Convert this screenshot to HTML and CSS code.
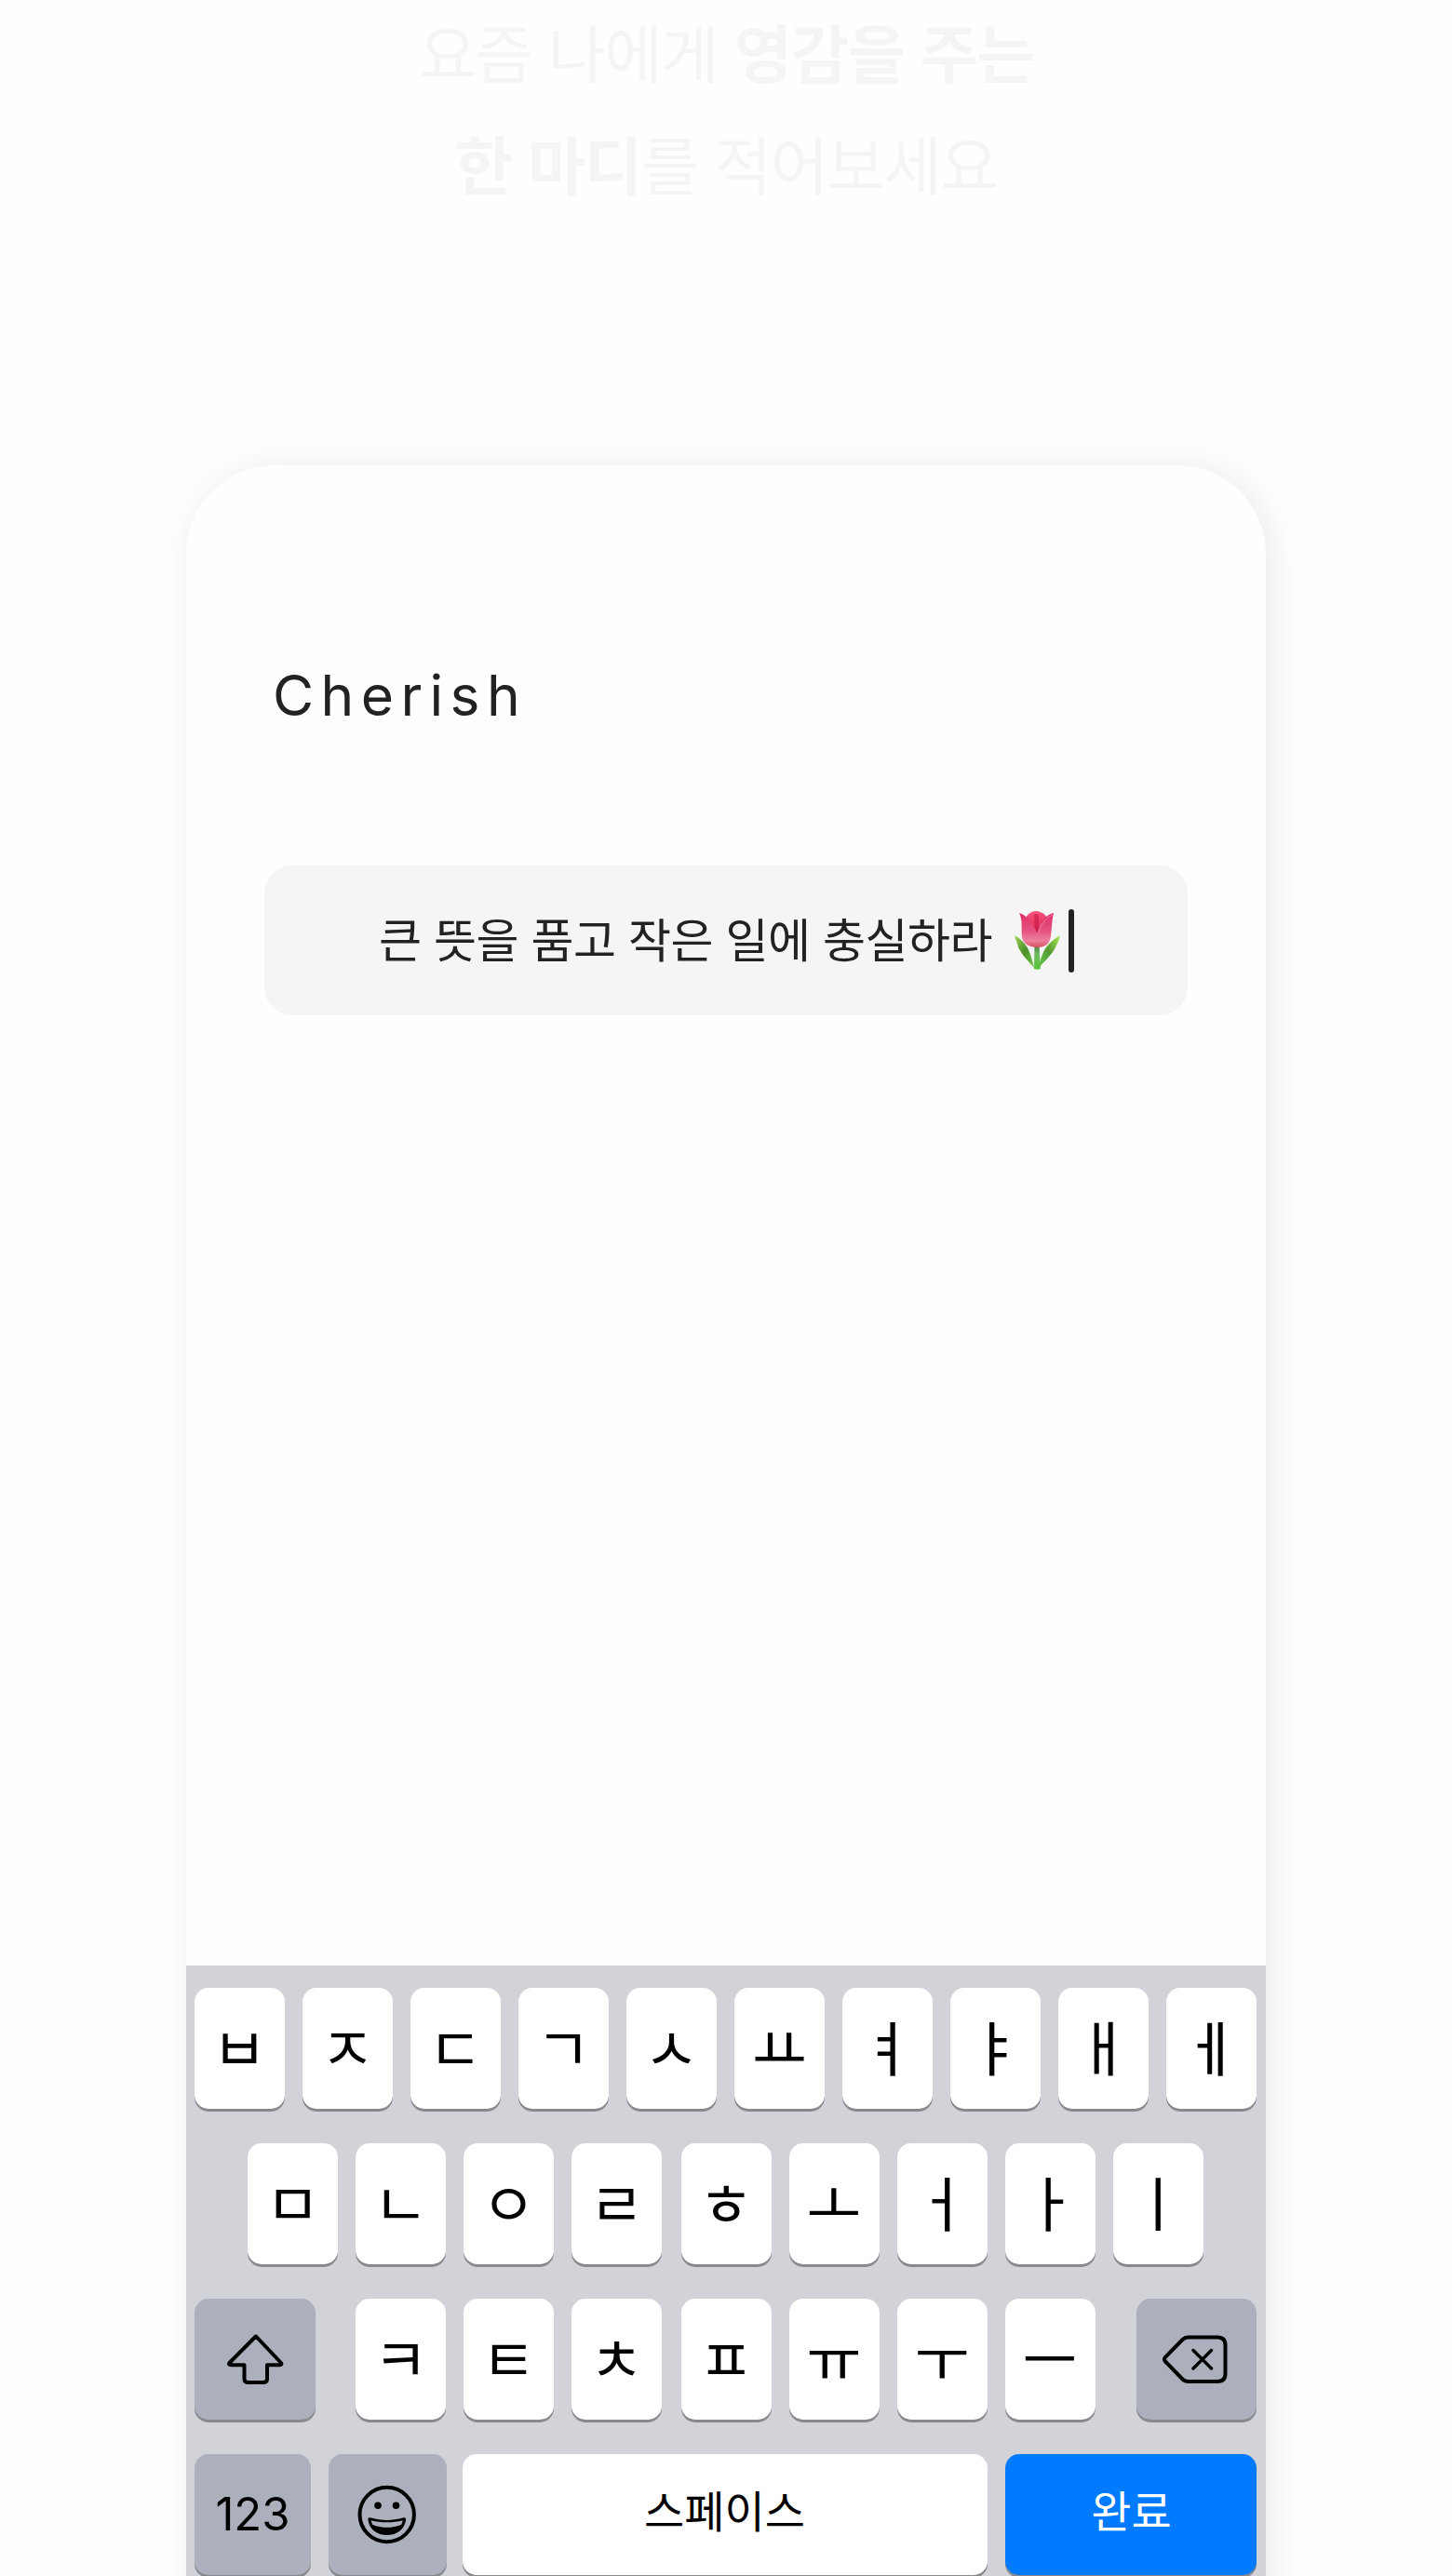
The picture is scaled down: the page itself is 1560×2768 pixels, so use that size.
FILE: index.html
```html
<!DOCTYPE html>
<html lang="ko">
<head>
<meta charset="utf-8">
<title>Cherish</title>
<link rel="stylesheet" href="styles.css">
</head>
<body>
<main class="page">
  <h1 class="headline">요즘 나에게 <b>영감을 주는</b><br><b>한 마디</b>를 적어보세요</h1>
  <section class="phone">
    <div class="content">
      <h2 class="brand">Cherish</h2>
      <div class="field">
        <span class="quote">큰 뜻을 품고 작은 일에 충실하라</span>
        <svg class="tulip" viewBox="0 0 49 63" width="49" height="63" aria-hidden="true">
          <defs>
            <linearGradient id="petal" x1="0" y1="0" x2="0" y2="1">
              <stop offset="0" stop-color="#e02f66"/><stop offset=".5" stop-color="#e4507f"/><stop offset=".8" stop-color="#ee7f9f"/><stop offset="1" stop-color="#d9505f"/>
            </linearGradient>
            <linearGradient id="inner" x1="0" y1="0" x2="0" y2="1">
              <stop offset="0" stop-color="#f9557f"/><stop offset="1" stop-color="#cf1746"/>
            </linearGradient>
            <linearGradient id="leaf" x1="0" y1="0" x2="1" y2="1">
              <stop offset="0" stop-color="#a4d657"/><stop offset=".5" stop-color="#4b8f2c"/><stop offset="1" stop-color="#72cc4a"/>
            </linearGradient>
            <linearGradient id="leafRight" x1="1" y1="0" x2="0" y2="1">
              <stop offset="0" stop-color="#b2ec55"/><stop offset=".5" stop-color="#569a35"/><stop offset="1" stop-color="#66c846"/>
            </linearGradient>
            <linearGradient id="stem" x1="0" y1="0" x2="0" y2="1">
              <stop offset="0" stop-color="#4e7a3a"/><stop offset=".35" stop-color="#6fbb63"/><stop offset="1" stop-color="#58c535"/>
            </linearGradient>
          </defs>
          <path fill="url(#leaf)" d="M0 26c7 4 13 10 16 18 2 6 4 11 5 17-6-7-13-14-17-22C3 34 1 31 0 26z"/>
          <path fill="url(#leafRight)" d="M49 26c-7 4-13 9-17 16-3 6-5 12-6 19 7-8 14-14 18-22 2-4 4-8 5-13z"/>
          <path fill="url(#stem)" d="M21.500 37h5l1.500 25c-2 1-5 1-7 0z"/>
          <path fill="url(#inner)" d="M12 7C15 2 19 0 23 0s9 2 12 7l-4 24H17z"/>
          <path fill="#c81843" d="M21 4c2-2 5-1 5 2v20h-4z" opacity=".6"/>
          <path fill="url(#petal)" d="M5 2c7 2 13 8 19.500 22C27 13 33 4 42 2c-2 8-2 17-3 25-1 8-6 12-14.500 12S9 35 8 28C7 19 9 10 5 2z"/>
          <path fill="none" stroke="#f590b0" stroke-width="1" d="M41 4c-8 4-13 11-16 20" opacity=".7"/>
        </svg>
        <span class="caret"></span>
      </div>
    </div>
    <div class="keyboard">
      <div class="row">
        <span class="key">ㅂ</span><span class="key">ㅈ</span><span class="key">ㄷ</span><span class="key">ㄱ</span><span class="key">ㅅ</span><span class="key">ㅛ</span><span class="key">ㅕ</span><span class="key">ㅑ</span><span class="key">ㅐ</span><span class="key">ㅔ</span>
      </div>
      <div class="row middle">
        <span class="key">ㅁ</span><span class="key">ㄴ</span><span class="key">ㅇ</span><span class="key">ㄹ</span><span class="key split">ㅎ</span><span class="key">ㅗ</span><span class="key">ㅓ</span><span class="key">ㅏ</span><span class="key">ㅣ</span>
      </div>
      <div class="row">
        <span class="key gray shift"><svg viewBox="0 0 130 130" width="130" height="130" aria-label="Shift"><path d="M65.300 41 37.500 69q-1.200 2.300 1.500 2.300H53.500V86q0 4 4 4h16.500q4 0 4-4V71.300h13.500q2.700 0 1.500-2.300L66.500 41q-.600-.600-1.200 0z"/></svg></span>
        <span class="key">ㅋ</span><span class="key">ㅌ</span><span class="key">ㅊ</span><span class="key split">ㅍ</span><span class="key">ㅠ</span><span class="key">ㅜ</span><span class="key">ㅡ</span>
        <span class="key gray delete"><svg viewBox="0 0 130 130" width="130" height="130" aria-label="Delete"><path d="M56.500 41.500H88q8.500 0 8.500 8.500v30.500q0 8.500-8.500 8.500H56.500q-3.500 0-6-2.500L32 67.500q-2-2.300 0-4.600L50.500 44q2.500-2.500 6-2.500z"/><path class="thin" d="m62 55.500 19.500 19.500m0-19.500L62 75"/></svg></span>
      </div>
      <div class="row">
        <span class="key gray numbers">123</span>
        <span class="key gray emoji"><svg viewBox="0 0 126 130" width="126" height="130" aria-label="Emoji"><circle class="face" cx="62.700" cy="65" r="29.200"/><circle class="dot" cx="53" cy="55.300" r="3.800"/><circle class="dot" cx="72.500" cy="55.300" r="3.800"/><path class="dot" fill-rule="evenodd" d="M42.500 71c-.500-2.500.800-3.300 3-2.500 11 3.200 23.500 3.200 34.500 0 2.200-.800 3.500 0 3 2.500C81.500 81 73.500 87 62.700 87S44 81 42.500 71zm3.200.300c.300 1.500.800 3 1.500 4.400 9.500 4.200 21.500 4.200 31 0 .700-1.400 1.200-2.900 1.500-4.400-10.700 2.700-23.300 2.700-34 0z"/></svg></span>
        <span class="key word space">스페이스</span>
        <span class="key word done">완료</span>
      </div>
    </div>
  </section>
</main>
</body>
</html>
```
FILE: styles.css
```css
* { box-sizing: border-box; }

body {
  margin: 0;
  background: #fefefe;
  color: #222;
  font-family: "Noto Sans CJK KR", sans-serif;
}

.page {
  height: 2768px;
  overflow: hidden;
  display: flex;
  flex-direction: column;
  align-items: center;
}

.headline {
  flex: none;
  height: 505px;
  margin: -5px 0 0;
  color: #f5f5f5;
  font-size: 68px;
  font-weight: 400;
  line-height: 120px;
  letter-spacing: -1.700px;
  text-align: center;
}

.headline b { font-weight: 700; }

.phone {
  flex: none;
  width: 1160px;
  height: 2300px;
  background: #fefefe;
  border-radius: 95px 95px 0 0;
  box-shadow: 6px 2px 38px rgba(0, 0, 0, .08);
}

.content {
  height: 1612px;
  padding: 211px 84px 0;
}

.brand {
  margin: 0 0 146px 9px;
  font-family: Inter, sans-serif;
  font-size: 60.500px;
  line-height: 73px;
  font-weight: 400;
  letter-spacing: 7.400px;
}

.field {
  display: flex;
  align-items: center;
  height: 161px;
  padding-left: 123px;
  background: #f5f5f5;
  border-radius: 30px;
}

.quote {
  flex: none;
  width: 683px;
  padding-bottom: 8px;
  font-size: 50px;
  line-height: 74px;
  letter-spacing: -.500px;
  white-space: nowrap;
}

.tulip { flex: none; }

.caret {
  width: 6px;
  height: 68px;
  margin-left: 9px;
  border-radius: 3px;
  background: #222;
}

.keyboard {
  display: flex;
  flex-direction: column;
  gap: 37px;
  height: 688px;
  padding: 24px 9.300px 0;
  background: #d2d3d9;
}

.row {
  display: flex;
  gap: 19px;
  height: 130px;
  flex: none;
}

.middle { padding-left: 57.200px; }

.key {
  flex: none;
  display: flex;
  align-items: center;
  justify-content: center;
  width: 97px;
  height: 130px;
  padding: 0 1px 8px 0;
  border-radius: 15px;
  background: #fff;
  box-shadow: 0 3px 0 #88898d;
  color: #000;
  font-size: 64px;
  line-height: 94px;
}

.split { margin-left: 1.500px; }

.gray {
  padding: 0;
  background: #abb0bc;
}

.key svg {
  flex: none;
  fill: none;
  stroke: #000;
  stroke-width: 4;
  stroke-linejoin: round;
  stroke-linecap: round;
}

.key .thin { stroke-width: 3.400; }
.key .dot { fill: #000; stroke: none; }

.shift { width: 129.500px; margin-right: 24.700px; }
.delete { width: 129.500px; margin-left: 24.700px; }

.numbers {
  width: 124.300px;
  font-family: Inter, sans-serif;
  font-size: 49px;
}

.emoji { width: 127px; }

.word {
  padding: 0 0 12px;
  font-size: 47px;
}

.space { width: 564px; margin-left: -2px; }

.done {
  width: 270px;
  padding-left: 2px;
  background: #007aff;
  color: #fff;
}
```
